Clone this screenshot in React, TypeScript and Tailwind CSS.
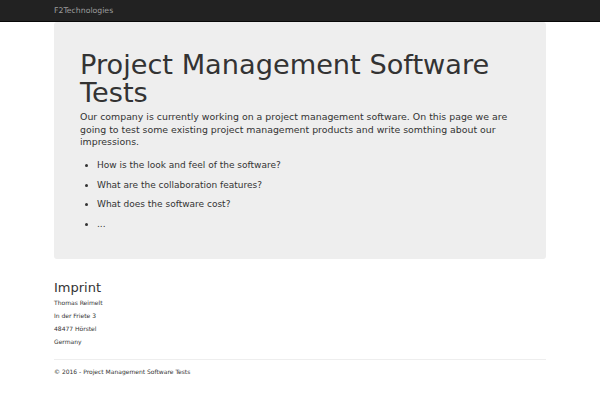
export default function App() {
  const questions = [
    'How is the look and feel of the software?',
    'What are the collaboration features?',
    'What does the software cost?',
    '...',
  ]

  return (
    <div className="min-h-screen w-full bg-white text-[#333] font-['DejaVu_Sans',sans-serif]">
      {/* Navbar */}
      <nav className="h-[22px] bg-[#222] border-b border-[#080808]">
        <div className="w-[492px] mx-auto h-full flex items-center">
          <span className="text-[7.75px] text-[#9d9d9d]">F2Technologies</span>
        </div>
      </nav>

      <div className="w-[492px] mx-auto">
        {/* Jumbotron */}
        <div className="bg-[#eee] rounded-[3px] px-[26px] pt-[29px] pb-[22px]">
          <h1 className="text-[27.2px] leading-[28px] text-[#333]">
            Project Management Software Tests
          </h1>
          <p className="mt-[4px] text-[9.4px] leading-[12.5px] text-[#333]">
            Our company is currently working on a project management software. On this page we are
            going to test some existing project management products and write somthing about our
            impressions.
          </p>
          <ul className="mt-[10.5px] pl-[17px] list-disc text-[9px] leading-[12.5px]">
            {questions.map((q) => (
              <li key={q} className="mb-[7px]">
                {q}
              </li>
            ))}
          </ul>
        </div>

        {/* Imprint */}
        <div className="mt-[21px]">
          <h2 className="text-[13px] leading-[16px] text-[#333]">Imprint</h2>
          <div className="text-[6px] leading-[13px] text-[#333]">
            <p>Thomas Reimelt</p>
            <p>In der Friete 3</p>
            <p>48477 Hörstel</p>
            <p>Germany</p>
          </div>
        </div>

        <hr className="mt-[11px] border-t border-[#eee]" />

        <footer className="pt-[7px] text-[6px] leading-[10px] text-[#333]">
          © 2016 - Project Management Software Tests
        </footer>
      </div>
    </div>
  )
}
